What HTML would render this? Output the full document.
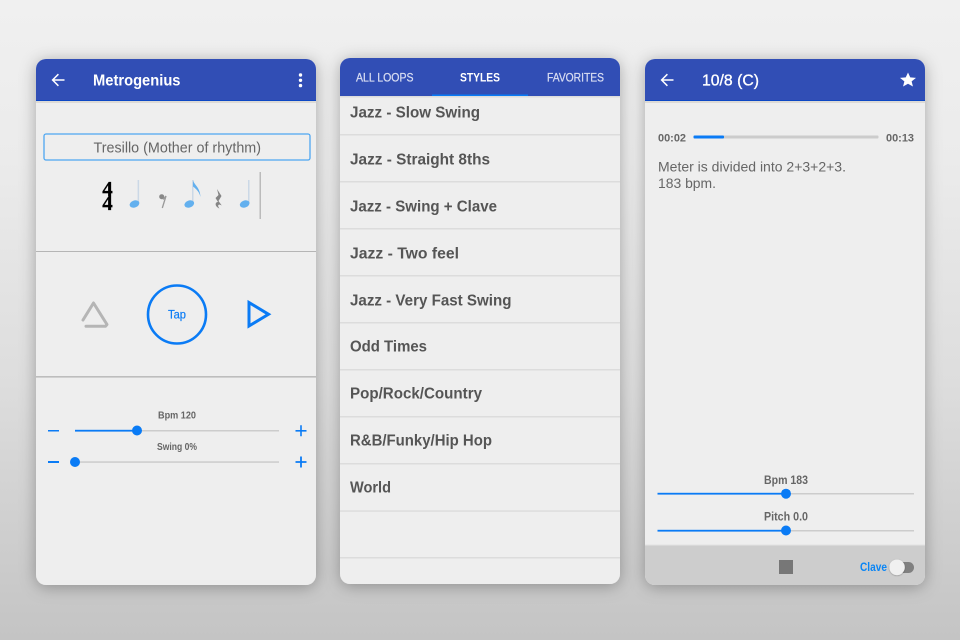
<!DOCTYPE html>
<html><head><meta charset="utf-8">
<style>
html,body{margin:0;padding:0;background:#ddd}
svg{display:block}
text{font-family:"Liberation Sans",sans-serif}
</style></head>
<body>
<svg xmlns="http://www.w3.org/2000/svg" width="960" height="640" viewBox="0 0 960 640">
<defs>
<linearGradient id="bg" x1="0" y1="0" x2="0" y2="1">
<stop offset="0" stop-color="#f0f0f0"/><stop offset=".25" stop-color="#ebebeb"/><stop offset=".6" stop-color="#dddddd"/><stop offset="1" stop-color="#c4c4c4"/>
</linearGradient>
<filter id="sh" x="-15%" y="-10%" width="130%" height="120%"><feDropShadow dx="0" dy="2" stdDeviation="8" flood-color="#000" flood-opacity=".3"/></filter>
<filter id="ts" x="-50%" y="-50%" width="200%" height="200%"><feDropShadow dx="0" dy="0.5" stdDeviation="0.8" flood-color="#000" flood-opacity=".35"/></filter>
<clipPath id="c1"><rect x="36" y="59" width="280" height="526" rx="10"/></clipPath>
<clipPath id="c2"><rect x="340" y="58" width="280" height="526" rx="10"/></clipPath>
<clipPath id="c3"><rect x="645" y="59" width="280" height="526" rx="10"/></clipPath>
</defs>
<rect width="960" height="640" fill="url(#bg)"/>

<!-- Card 1 -->
<rect x="36" y="59" width="280" height="526" rx="10" fill="#eee" filter="url(#sh)"/>
<g clip-path="url(#c1)">
<rect x="36" y="59" width="280" height="42" fill="#314eb5"/>
<rect x="36" y="100" width="280" height="1" fill="#0d47c4"/>
<rect x="36" y="101" width="280" height="2" fill="#dcdad6"/>
<rect x="36" y="251" width="280" height="1" fill="#b5b5b5"/>
<rect x="36" y="376" width="280" height="1.6" fill="#bdbdbd"/>
</g>
<path d="M64.5 80H52.8M58.4 74.2L52.6 80L58.4 85.8" fill="none" stroke="#fff" stroke-width="1.5"/>
<text x="93" y="85.7" font-size="16" font-weight="700" fill="#fff" textLength="87.5" lengthAdjust="spacingAndGlyphs">Metrogenius</text>
<circle cx="300.5" cy="75" r="1.7" fill="#fff"/><circle cx="300.5" cy="80.3" r="1.7" fill="#fff"/><circle cx="300.5" cy="85.6" r="1.7" fill="#fff"/>
<rect x="44" y="134" width="266" height="26" rx="2" fill="none" stroke="#4da6f2" stroke-width="1.3"/>
<text x="93.5" y="152.7" font-size="14.5" fill="#666" textLength="167.5" lengthAdjust="spacingAndGlyphs">Tresillo (Mother of rhythm)</text>

<text x="107.5" y="196" font-size="21" font-weight="700" text-anchor="middle" fill="#000" stroke="#000" stroke-width=".3" style="font-family:'Liberation Serif',serif">4</text>
<text x="107.5" y="210" font-size="21" font-weight="700" text-anchor="middle" fill="#000" stroke="#000" stroke-width=".3" style="font-family:'Liberation Serif',serif">4</text>
<g fill="#63b0ee">
<rect x="137.6" y="180" width="1.5" height="23" fill="#cbd8e6"/>
<ellipse cx="134.5" cy="204" rx="5" ry="3.5" transform="rotate(-20 134.5 204)"/>
<rect x="192" y="180" width="1.5" height="23" fill="#cbd8e6"/>
<ellipse cx="189.3" cy="204" rx="5" ry="3.5" transform="rotate(-20 189.3 204)"/>
<path d="M193 180C194 185 200 187 200.5 197C199 191 196 189 193 186.5Z"/>
<rect x="248" y="180" width="1.5" height="23" fill="#cbd8e6"/>
<ellipse cx="244.7" cy="204" rx="5" ry="3.5" transform="rotate(-20 244.7 204)"/>
</g>
<circle cx="161.7" cy="196.7" r="2.5" fill="#888"/>
<path d="M163 199.500L166 196L162.300 208" fill="none" stroke="#999" stroke-width="1.300"/>
<path d="M217 189L221.500 196L218.500 201L221.800 205.500C218.500 203.500 216.800 205 219.500 208.500C214.500 206.500 214.800 202 218 202L215.500 198L218.500 195Z" fill="#858585"/>
<rect x="259.500" y="172" width="1.500" height="47" fill="#bbb"/>

<path d="M83 320L93.500 303L107 324.500L105.500 326.200H86" fill="none" stroke="#b5b5b5" stroke-width="3" stroke-linecap="round" stroke-linejoin="round"/>
<circle cx="177" cy="314.500" r="29" fill="none" stroke="#0a7bf5" stroke-width="2.600"/>
<text x="168" y="318.300" font-size="12" fill="#0a7bf5" stroke="#0a7bf5" stroke-width=".2" textLength="18" lengthAdjust="spacingAndGlyphs">Tap</text>
<path d="M249 302.500L268.500 314.300L249 326Z" fill="none" stroke="#0a7bf5" stroke-width="3"/>

<text x="158" y="418.300" font-size="10.500" font-weight="700" fill="#666" textLength="38" lengthAdjust="spacingAndGlyphs">Bpm 120</text>
<rect x="75" y="430" width="204" height="1.500" fill="#ccc"/>
<rect x="75" y="429.800" width="62" height="1.800" fill="#0a7bf5"/>
<circle cx="137" cy="430.500" r="5" fill="#0a7bf5"/>
<rect x="48" y="430" width="11" height="1.500" fill="#0a7bf5"/>
<path d="M295.500 430.800H306.500M301 425.300V436.300" stroke="#0a7bf5" stroke-width="1.600" fill="none"/>
<text x="157" y="450" font-size="10.500" font-weight="700" fill="#666" textLength="40" lengthAdjust="spacingAndGlyphs">Swing 0%</text>
<rect x="75" y="461.300" width="204" height="1.500" fill="#ccc"/>
<circle cx="75" cy="462" r="5" fill="#0a7bf5"/>
<rect x="48" y="461" width="11" height="2" fill="#0a7bf5"/>
<path d="M295.500 462H306.500M301 456.500V467.500" stroke="#0a7bf5" stroke-width="1.800" fill="none"/>

<!-- Card 2 -->
<rect x="340" y="58" width="280" height="526" rx="10" fill="#eee" filter="url(#sh)"/>
<g clip-path="url(#c2)">
<rect x="340" y="58" width="280" height="38" fill="#314eb5"/>
<rect x="432" y="94.500" width="96" height="1.700" fill="#0a7bf5"/>
<rect x="340" y="96" width="280" height="1.500" fill="#dcdcdc"/>
<g fill="#dcdcdc">
<rect x="340" y="134" width="280" height="1.500"/><rect x="340" y="181" width="280" height="1.500"/>
<rect x="340" y="228" width="280" height="1.500"/><rect x="340" y="275" width="280" height="1.500"/>
<rect x="340" y="322" width="280" height="1.500"/><rect x="340" y="369" width="280" height="1.500"/>
<rect x="340" y="416" width="280" height="1.500"/><rect x="340" y="463" width="280" height="1.500"/>
<rect x="340" y="510.300" width="280" height="1.500"/><rect x="340" y="557" width="280" height="1.500"/>
</g>
</g>
<text x="356" y="81.700" font-size="11.500" fill="#d8ddf2" stroke="#d8ddf2" stroke-width=".25" textLength="57.500" lengthAdjust="spacingAndGlyphs">ALL LOOPS</text>
<text x="460" y="81.700" font-size="11.500" font-weight="700" fill="#fff" textLength="40" lengthAdjust="spacingAndGlyphs">STYLES</text>
<text x="547" y="81.700" font-size="11.500" fill="#d8ddf2" stroke="#d8ddf2" stroke-width=".25" textLength="57" lengthAdjust="spacingAndGlyphs">FAVORITES</text>
<g font-size="16" font-weight="700" fill="#555">
<text x="350" y="117.700" textLength="130" lengthAdjust="spacingAndGlyphs">Jazz - Slow Swing</text>
<text x="350" y="164.500" textLength="140" lengthAdjust="spacingAndGlyphs">Jazz - Straight 8ths</text>
<text x="350" y="211.500" textLength="147" lengthAdjust="spacingAndGlyphs">Jazz - Swing + Clave</text>
<text x="350" y="258.500" textLength="109" lengthAdjust="spacingAndGlyphs">Jazz - Two feel</text>
<text x="350" y="305.500" textLength="161.500" lengthAdjust="spacingAndGlyphs">Jazz - Very Fast Swing</text>
<text x="350" y="351.500" textLength="77" lengthAdjust="spacingAndGlyphs">Odd Times</text>
<text x="350" y="398.500" textLength="132" lengthAdjust="spacingAndGlyphs">Pop/Rock/Country</text>
<text x="350" y="445.500" textLength="142" lengthAdjust="spacingAndGlyphs">R&amp;B/Funky/Hip Hop</text>
<text x="350" y="492.500" textLength="41" lengthAdjust="spacingAndGlyphs">World</text>
</g>

<!-- Card 3 -->
<rect x="645" y="59" width="280" height="526" rx="10" fill="#eee" filter="url(#sh)"/>
<g clip-path="url(#c3)">
<rect x="645" y="59" width="280" height="42" fill="#314eb5"/>
<rect x="645" y="100" width="280" height="1" fill="#0d47c4"/>
<rect x="645" y="101" width="280" height="2" fill="#dcdad6"/>
<rect x="645" y="545" width="280" height="40" fill="#cdcdcd"/>
<rect x="645" y="544.500" width="280" height="1" fill="#e2e2e2"/>
</g>
<path d="M673.500 80H661.800M667.400 74.200L661.600 80L667.400 85.800" fill="none" stroke="#fff" stroke-width="1.500"/>
<text x="702" y="85.700" font-size="16" fill="#fff" stroke="#fff" stroke-width=".35" textLength="57" lengthAdjust="spacingAndGlyphs">10/8 (C)</text>
<path transform="translate(898.400 71) scale(.8 .74)" d="M12 17.270L18.180 21L16.540 13.970L22 9.240L14.810 8.630L12 2L9.190 8.630L2 9.240L7.460 13.970L5.820 21Z" fill="#fff"/>
<text x="658" y="141.700" font-size="11" font-weight="700" fill="#666" textLength="28" lengthAdjust="spacingAndGlyphs">00:02</text>
<rect x="693.500" y="135.500" width="185" height="3" rx="1" fill="#ccc"/>
<rect x="693.500" y="135.500" width="30.500" height="3" rx="1" fill="#0a7bf5"/>
<text x="886" y="141.700" font-size="11" font-weight="700" fill="#666" textLength="28" lengthAdjust="spacingAndGlyphs">00:13</text>
<text x="658" y="171.700" font-size="14" fill="#666" textLength="188" lengthAdjust="spacingAndGlyphs">Meter is divided into 2+3+2+3.</text>
<text x="658" y="188" font-size="14" fill="#666" textLength="58" lengthAdjust="spacingAndGlyphs">183 bpm.</text>

<text x="764" y="484" font-size="11.500" font-weight="700" fill="#666" textLength="44" lengthAdjust="spacingAndGlyphs">Bpm 183</text>
<rect x="657.500" y="493" width="256.500" height="1.500" fill="#ccc"/>
<rect x="657.500" y="492.800" width="128.500" height="1.800" fill="#0a7bf5"/>
<circle cx="786" cy="493.700" r="5" fill="#0a7bf5"/>
<text x="764" y="520.700" font-size="11.500" font-weight="700" fill="#666" textLength="44" lengthAdjust="spacingAndGlyphs">Pitch 0.0</text>
<rect x="657.500" y="530" width="256.500" height="1.500" fill="#ccc"/>
<rect x="657.500" y="529.800" width="128.500" height="1.800" fill="#0a7bf5"/>
<circle cx="786" cy="530.500" r="5" fill="#0a7bf5"/>
<rect x="779" y="560" width="14" height="14" fill="#777"/>
<text x="860" y="571" font-size="12" font-weight="700" fill="#0a85f5" textLength="27" lengthAdjust="spacingAndGlyphs">Clave</text>
<rect x="889" y="562" width="25" height="11" rx="5.500" fill="#808080"/>
<circle cx="897" cy="567.300" r="7.800" fill="#f0f0f0" filter="url(#ts)"/>
</svg>
</body></html>
